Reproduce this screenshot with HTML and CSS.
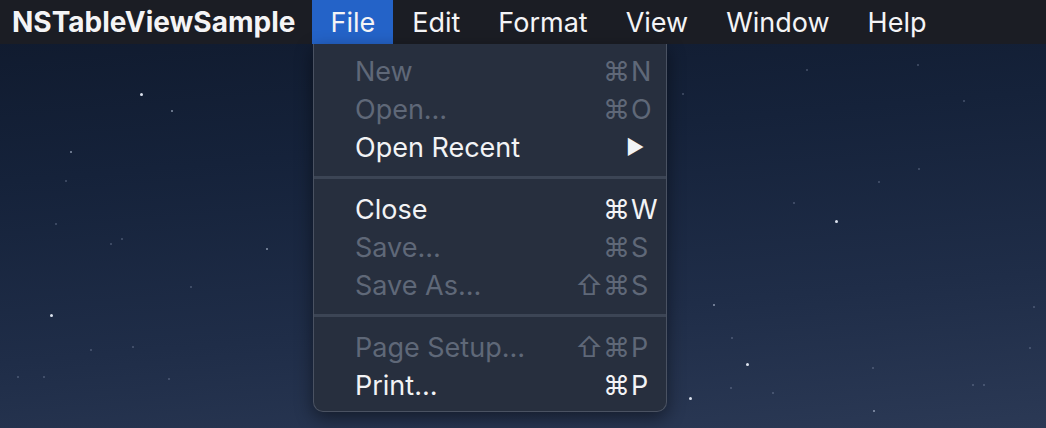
FILE: index.html
```html
<!DOCTYPE html>
<html>
<head>
<meta charset="utf-8">
<link rel="stylesheet" href="styles.css">
</head>
<body>
<div class="desktop">
  <div class="stars">
    <i class="star big" style="left:140px;top:93px"></i>
    <i class="star" style="left:171px;top:110px"></i>
    <i class="star" style="left:70px;top:151px"></i>
    <i class="star dim" style="left:65px;top:180px"></i>
    <i class="star dim" style="left:55px;top:223px"></i>
    <i class="star dim" style="left:110px;top:243px"></i>
    <i class="star dim" style="left:121px;top:238px"></i>
    <i class="star" style="left:266px;top:248px"></i>
    <i class="star dim" style="left:190px;top:286px"></i>
    <i class="star big" style="left:50px;top:314px"></i>
    <i class="star dim" style="left:90px;top:349px"></i>
    <i class="star dim" style="left:132px;top:346px"></i>
    <i class="star dim" style="left:168px;top:378px"></i>
    <i class="star dim" style="left:17px;top:376px"></i>
    <i class="star dim" style="left:43px;top:376px"></i>
    <i class="star dim" style="left:917px;top:64px"></i>
    <i class="star dim" style="left:806px;top:69px"></i>
    <i class="star dim" style="left:682px;top:93px"></i>
    <i class="star dim" style="left:963px;top:100px"></i>
    <i class="star dim" style="left:918px;top:168px"></i>
    <i class="star dim" style="left:878px;top:181px"></i>
    <i class="star dim" style="left:793px;top:202px"></i>
    <i class="star big" style="left:835px;top:220px"></i>
    <i class="star" style="left:713px;top:304px"></i>
    <i class="star dim" style="left:731px;top:337px"></i>
    <i class="star big" style="left:746px;top:363px"></i>
    <i class="star dim" style="left:730px;top:387px"></i>
    <i class="star big" style="left:689px;top:397px"></i>
    <i class="star dim" style="left:772px;top:392px"></i>
    <i class="star dim" style="left:872px;top:367px"></i>
    <i class="star dim" style="left:972px;top:384px"></i>
    <i class="star dim" style="left:983px;top:384px"></i>
    <i class="star dim" style="left:1033px;top:306px"></i>
    <i class="star dim" style="left:1029px;top:347px"></i>
    <i class="star" style="left:873px;top:410px"></i>
  </div>

  <div class="menubar">
    <span class="app">NSTableViewSample</span>
    <span class="mb-item active">File</span>
    <span class="mb-item">Edit</span>
    <span class="mb-item">Format</span>
    <span class="mb-item">View</span>
    <span class="mb-item">Window</span>
    <span class="mb-item">Help</span>
  </div>

  <div class="menu">
    <div class="row disabled"><span class="label">New</span><span class="mods">⌘</span><span class="key">N</span></div>
    <div class="row disabled"><span class="label">Open…</span><span class="mods">⌘</span><span class="key">O</span></div>
    <div class="row"><span class="label">Open Recent</span><span class="mods"></span><span class="key arrow">▶</span></div>
    <div class="sep"></div>
    <div class="row"><span class="label">Close</span><span class="mods">⌘</span><span class="key">W</span></div>
    <div class="row disabled"><span class="label">Save…</span><span class="mods">⌘</span><span class="key">S</span></div>
    <div class="row disabled"><span class="label">Save As…</span><span class="mods">⇧⌘</span><span class="key">S</span></div>
    <div class="sep"></div>
    <div class="row disabled"><span class="label">Page Setup…</span><span class="mods">⇧⌘</span><span class="key">P</span></div>
    <div class="row"><span class="label">Print…</span><span class="mods">⌘</span><span class="key">P</span></div>
  </div>
</div>
</body>
</html>
```

FILE: styles.css
```css
html, body {
  margin: 0;
  padding: 0;
}
body {
  width: 1046px;
  height: 428px;
  overflow: hidden;
  font-family: Inter, "Noto Sans", "DejaVu Sans", sans-serif;
}
.desktop {
  position: relative;
  width: 1046px;
  height: 428px;
  background: linear-gradient(175deg, #0f192c 0%, #15223a 35%, #1f2d48 70%, #2b3955 100%);
}
.stars {
  position: absolute;
  inset: 0;
}
.star {
  position: absolute;
  width: 2px;
  height: 2px;
  border-radius: 50%;
  background: rgba(210, 222, 240, 0.6);
}
.star.big {
  width: 3px;
  height: 3px;
  background: rgba(240, 245, 255, 0.9);
}
.star.dim {
  background: rgba(160, 175, 200, 0.35);
}
.menubar {
  position: relative;
  height: 44px;
  background: #1b1d24;
  display: flex;
  align-items: stretch;
  color: #f4f4f6;
  font-size: 27px;
}
.app {
  display: flex;
  align-items: center;
  font-weight: 700;
  font-size: 28px;
  padding: 0 17px 0 12px;
}
.mb-item {
  display: flex;
  align-items: center;
  padding: 0 19px;
}
.mb-item.active {
  padding: 0 18px;
  background: #2463c8;
}
.menu {
  position: absolute;
  left: 313px;
  top: 44px;
  width: 354px;
  box-sizing: border-box;
  padding: 8px 0 7px;
  background: #272f3e;
  border: 1px solid #4a5262;
  border-top: none;
  border-radius: 0 0 10px 10px;
  box-shadow: 0 6px 18px rgba(0, 0, 0, 0.45);
  font-size: 27px;
  color: #f2f3f5;
}
.row {
  height: 38px;
  display: grid;
  grid-template-columns: 1fr auto 26px;
  align-items: center;
  padding: 0 10px 0 41px;
}
.row.disabled {
  color: #5f6878;
}
.mods {
  text-align: right;
}
.key {
  padding-left: 1px;
}
.key.arrow {
  font-size: 20px;
  padding-left: 0;
  margin-left: -4px;
}
.sep {
  height: 3px;
  margin: 10px 0 11px;
  background: #3c4555;
}
```
